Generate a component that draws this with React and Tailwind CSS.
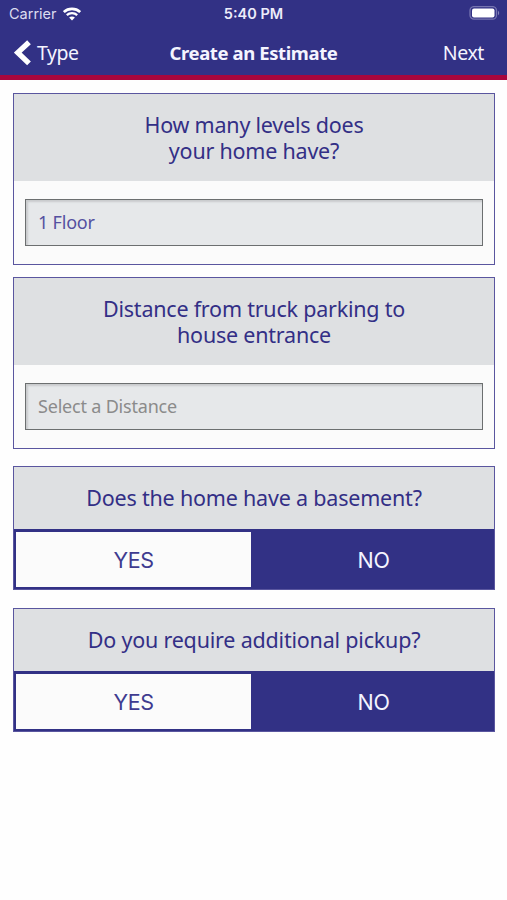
import { useState } from 'react';

const StatusBar = () => (
  <div className="h-7 grid grid-cols-[1fr_auto_1fr] items-center pl-[9px] pr-[7px] font-['Inter',sans-serif] text-[#dcdcf0]">
    <div className="flex items-center gap-1.5">
      <span className="text-[14.5px]">Carrier</span>
      <svg width="18" height="14" viewBox="0 0 18 14" fill="none" stroke="#fff">
        <path d="M.8 5C5.2 .7 12.8 .7 17.2 5" strokeWidth="2.7" />
        <path d="M3.8 8.2c2.9-2.8 7.5-2.8 10.4 0" strokeWidth="2.3" />
        <path d="M9 13.6l-2.9-3c1.6-1.4 4.2-1.4 5.8 0z" fill="#fff" stroke="none" />
      </svg>
    </div>
    <span className="mr-[2px] font-semibold text-[14.5px] text-[#ececfa]">5:40 PM</span>
    <div className="flex justify-end pb-px">
      <svg width="31" height="15" viewBox="0 0 31 15" fill="none">
        <rect x="1" y=".6" width="26.5" height="12.6" rx="4" stroke="#7674b0" strokeWidth="1.3" />
        <rect x="3" y="2.4" width="22.5" height="9" rx="2" fill="#fff" />
        <path d="M29 4.8c1.6.7 1.6 3.7 0 4.4z" fill="#8584b8" />
      </svg>
    </div>
  </div>
);

const NavBar = () => (
  <div className="h-[47px] pt-[3px] grid grid-cols-[1fr_auto_1fr] items-center text-[19.5px] text-[#f4f4ff]">
    <button className="flex items-center pl-[14px] gap-[6px]">
      <svg width="17" height="26" viewBox="0 0 17 26" fill="none" stroke="#fff" strokeWidth="5.4">
        <path d="M15 2.2L3.8 12.6 15 23.4" />
      </svg>
      <span className="tracking-[-0.5px]">Type</span>
    </button>
    <h1 className="font-bold text-[18.5px] tracking-[-0.4px]">Create an Estimate</h1>
    <button className="text-right pr-[23px] tracking-[-0.4px]">Next</button>
  </div>
);

const SelectCard = ({ title, value, placeholder }) => (
  <section className="h-[172px] border border-[#5a569f] bg-[#fbfbfb]">
    <h2 className="h-[87px] pt-[18px] bg-[#dee0e2] text-center text-[21.5px] leading-[26px] tracking-[-0.22px] whitespace-pre-line text-[#332f86]">
      {title}
    </h2>
    <div className="pt-[18px] px-[11px]">
      <div className="h-[47px] flex items-center px-3 border-[1.5px] border-[#6c6f70] bg-[#e6e8ea] shadow-[inset_2px_2px_2px_#c9cbcd] text-[18px] tracking-[-0.2px]">
        {value ? (
          <span className="text-[#5450a0]">{value}</span>
        ) : (
          <span className="text-[#8b8b8b]">{placeholder}</span>
        )}
      </div>
    </div>
  </section>
);

const YesNoCard = ({ question }) => {
  const [answer, setAnswer] = useState('NO');

  return (
    <section className="h-[124px] flex flex-col border border-[#5a569f] bg-[#dee0e2]">
      <h2 className="h-[62px] flex items-center justify-center text-[21.5px] tracking-[-0.2px] text-[#332f86]">
        {question}
      </h2>
      <div className="flex-1 grid grid-cols-2 font-['Inter',sans-serif] text-[21.5px] tracking-[-0.4px]">
        {['YES', 'NO'].map((option) => (
          <button
            key={option}
            onClick={() => setAnswer(option)}
            className={`border-2 border-t-[3px] border-r-[3px] border-[#323185] pt-[2px] ${
              answer === option
                ? 'bg-[#323185] text-[#f4f4ff]'
                : 'bg-[#fbfbfb] text-[#3f3b90]'
            }`}
          >
            {option}
          </button>
        ))}
      </div>
    </section>
  );
};

const App = () => (
  <div className="min-h-[900px] bg-[#fefefe] font-['Noto_Sans',sans-serif]">
    <header className="h-20 bg-[#323185] border-b-[5px] border-[#a8063c]">
      <StatusBar />
      <NavBar />
    </header>
    <main className="pl-[13px] pr-3 pt-[13px]">
      <div className="flex flex-col gap-3">
        <SelectCard title={'How many levels does\nyour home have?'} value="1 Floor" />
        <SelectCard
          title={'Distance from truck parking to\nhouse entrance'}
          placeholder="Select a Distance"
        />
      </div>
      <div className="mt-[17px] flex flex-col gap-[18px]">
        <YesNoCard question="Does the home have a basement?" />
        <YesNoCard question="Do you require additional pickup?" />
      </div>
    </main>
  </div>
);

export default App;
